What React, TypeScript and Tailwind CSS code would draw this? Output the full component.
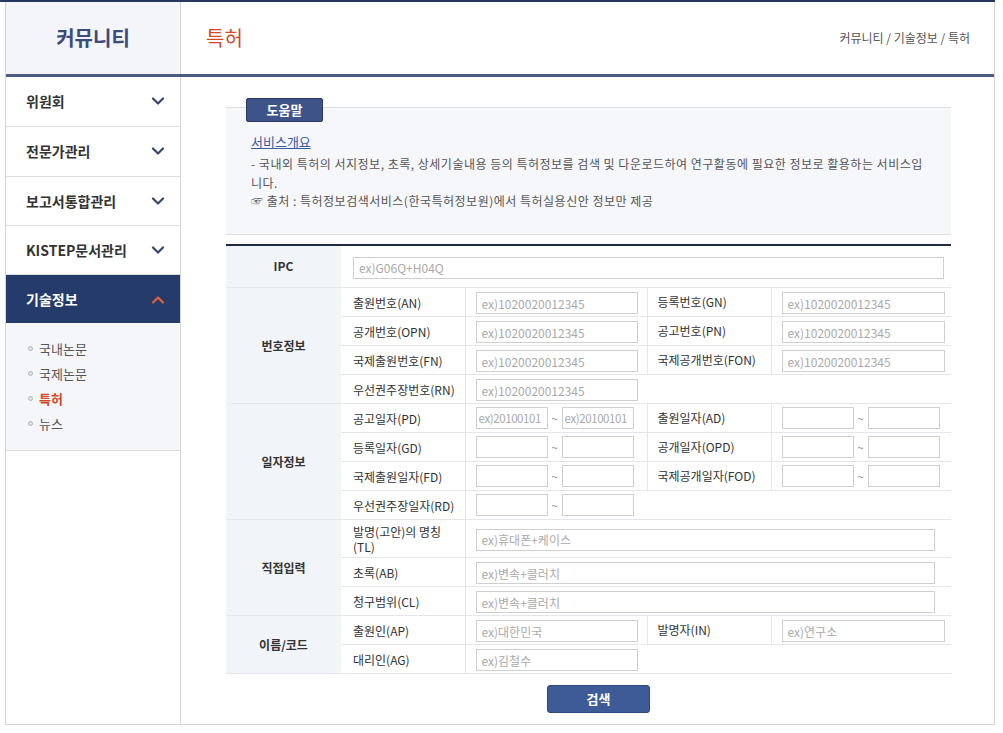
import type { ReactNode } from 'react';

const FONT = '"Noto Sans CJK KR", "Noto Sans", sans-serif';

const menu = [
  { name: '위원회', h: 'h-[50px]' },
  { name: '전문가관리', h: 'h-[50px]' },
  { name: '보고서통합관리', h: 'h-[49px]' },
  { name: 'KISTEP문서관리', h: 'h-[49px]' },
];
const subMenu = ['국내논문', '국제논문', '특허', '뉴스'];

function Chevron({ up = false, color }: { up?: boolean; color: string }) {
  return (
    <svg width="14" height="9" viewBox="0 0 14 9" fill="none" stroke={color} strokeWidth="2.2" strokeLinecap="round" strokeLinejoin="round">
      {up ? <path d="M2 7.5 7 2.5l5 5" /> : <path d="M2 1.5 7 6.5l5-5" />}
    </svg>
  );
}

const inputCls =
  'h-[22px] border border-[#cfcfcf] bg-white text-[#333] placeholder:text-[#aaaaaa] outline-none';

function Field({ w, ph, pad = 'px-[5px] text-[12px]' }: { w: string; ph?: string; pad?: string }) {
  return <input type="text" placeholder={ph} className={`${inputCls} ${pad} ${w}`} />;
}

// date inputs are narrow, so the placeholder gets a tighter setting
const datePad = 'px-[2px] text-[11.5px] tracking-[-0.4px]';

function DateRange({ ph }: { ph?: boolean }) {
  return (
    <div className="flex items-center">
      <Field w="w-[72px]" pad={datePad} ph={ph ? 'ex)20100101' : undefined} />
      <span className="w-[14px] text-center text-[11px] text-[#888]">~</span>
      <Field w="w-[72px]" pad={datePad} ph={ph ? 'ex)20100101' : undefined} />
    </div>
  );
}

const th = 'border-b border-[#e3e6ea] bg-[#f1f4f9] text-center align-middle text-[12px] font-bold text-[#333]';
const lbl = 'border-b border-[#e3e6ea] pl-[12px] align-middle text-[12px] leading-[15px] text-[#333]';
const lbl2 = 'border-b border-l border-[#e3e6ea] pl-[10px] align-middle text-[12px] text-[#333]';
const val = 'border-b border-l border-[#e3e6ea] pl-[10px] align-middle';

function Row({ h = 'h-[29px]', children }: { h?: string; children: ReactNode }) {
  return <tr className={h}>{children}</tr>;
}

export default function App() {
  return (
    <div className="min-h-[733px] bg-white" style={{ fontFamily: FONT }}>
      <div className="h-[2px] w-[995px] bg-[#27385f]" />
      <div className="ml-[5px] w-[990px] border-x border-b border-[#d6d6d6]">
        {/* Header */}
        <div className="flex h-[75px] border-b-[3px] border-[#4d5b80]">
          <div className="flex w-[175px] items-center justify-center border-r border-[#d6d6d6] bg-[#f4f5f9]">
            <span className="text-[20px] font-bold text-[#3b4b7a]">커뮤니티</span>
          </div>
          <div className="flex flex-1 items-center justify-between pl-[25px] pr-[24px]">
            <h1 className="text-[20px] text-[#d24a2a]">특허</h1>
            <span className="text-[12px] text-[#555]">커뮤니티 / 기술정보 / 특허</span>
          </div>
        </div>

        <div className="flex">
          {/* Sidebar */}
          <aside className="w-[175px] shrink-0 border-r border-[#d6d6d6]">
            {menu.map((m) => (
              <div key={m.name} className={`flex ${m.h} items-center justify-between border-b border-[#dcdcdc] pl-[20px] pr-[15px]`}>
                <span className="text-[14px] font-bold text-[#333]">{m.name}</span>
                <Chevron color="#34456e" />
              </div>
            ))}
            <div className="flex h-[48px] items-center justify-between bg-[#253b69] pl-[20px] pr-[15px]">
              <span className="text-[14px] font-bold text-white">기술정보</span>
              <Chevron up color="#e2603a" />
            </div>
            <ul className="border-b border-[#dcdcdc] bg-[#f5f6f9] pb-[14px] pt-[13px]">
              {subMenu.map((s) => (
                <li key={s} className="flex h-[25px] items-center pl-[22px]">
                  <span className="mr-[6px] h-[5px] w-[5px] rounded-full border border-[#b5b5b5] bg-[#e4e4e4]" />
                  <span className={s === '특허' ? 'text-[13px] font-bold text-[#d24a2a]' : 'text-[13px] text-[#555]'}>{s}</span>
                </li>
              ))}
            </ul>
          </aside>

          {/* Content */}
          <main className="flex-1 pb-[11px] pl-[45px] pr-[44px] pt-[21px]">
            <div className="relative">
              <div className="relative z-10 ml-[20px] flex h-[24px] w-[77px] items-center justify-center rounded-[2px] border border-[#2a3a62] bg-[#3e5388] text-[13px] font-bold text-white">
                도움말
              </div>
              <div className="-mt-[15px] border-y border-[#dddddd] bg-[#f5f7fb] pb-[23px] pl-[25px] pr-[25px] pt-[20px]">
                <a className="text-[13px] text-[#3a5aa8] underline">서비스개요</a>
                <p className="mt-[3px] text-[12px] leading-[18.5px] tracking-[0.5px] text-[#555]">
                  - 국내외 특허의 서지정보, 초록, 상세기술내용 등의 특허정보를 검색 및 다운로드하여 연구활동에 필요한 정보로 활용하는 서비스입니다.
                  <br />☞ 출처 : 특허정보검색서비스(한국특허정보원)에서 특허실용신안 정보만 제공
                </p>
              </div>
            </div>

            <table className="mt-[9px] w-full table-fixed border-collapse border-t-2 border-[#1f2a44]">
              <colgroup>
                <col className="w-[115px]" />
                <col className="w-[124px]" />
                <col className="w-[182px]" />
                <col className="w-[124px]" />
                <col className="w-[180px]" />
              </colgroup>
              <tbody>
                <Row h="h-[43px]">
                  <td className={th}>IPC</td>
                  <td colSpan={4} className="border-b border-[#e3e6ea] pl-[12px] align-middle">
                    <Field w="w-[591px]" ph="ex)G06Q+H04Q" />
                  </td>
                </Row>

                <Row>
                  <td rowSpan={4} className={th}>번호정보</td>
                  <td className={lbl}>출원번호(AN)</td>
                  <td className={val}><Field w="w-[162px]" ph="ex)1020020012345" /></td>
                  <td className={lbl2}>등록번호(GN)</td>
                  <td className={val}><Field w="w-[163px]" ph="ex)1020020012345" /></td>
                </Row>
                <Row>
                  <td className={lbl}>공개번호(OPN)</td>
                  <td className={val}><Field w="w-[162px]" ph="ex)1020020012345" /></td>
                  <td className={lbl2}>공고번호(PN)</td>
                  <td className={val}><Field w="w-[163px]" ph="ex)1020020012345" /></td>
                </Row>
                <Row>
                  <td className={lbl}>국제출원번호(FN)</td>
                  <td className={val}><Field w="w-[162px]" ph="ex)1020020012345" /></td>
                  <td className={lbl2}>국제공개번호(FON)</td>
                  <td className={val}><Field w="w-[163px]" ph="ex)1020020012345" /></td>
                </Row>
                <Row>
                  <td className={lbl}>우선권주장번호(RN)</td>
                  <td colSpan={3} className={val}><Field w="w-[162px]" ph="ex)1020020012345" /></td>
                </Row>

                <Row>
                  <td rowSpan={4} className={th}>일자정보</td>
                  <td className={lbl}>공고일자(PD)</td>
                  <td className={val}><DateRange ph /></td>
                  <td className={lbl2}>출원일자(AD)</td>
                  <td className={val}><DateRange /></td>
                </Row>
                <Row>
                  <td className={lbl}>등록일자(GD)</td>
                  <td className={val}><DateRange /></td>
                  <td className={lbl2}>공개일자(OPD)</td>
                  <td className={val}><DateRange /></td>
                </Row>
                <Row>
                  <td className={lbl}>국제출원일자(FD)</td>
                  <td className={val}><DateRange /></td>
                  <td className={lbl2}>국제공개일자(FOD)</td>
                  <td className={val}><DateRange /></td>
                </Row>
                <Row>
                  <td className={lbl}>우선권주장일자(RD)</td>
                  <td colSpan={3} className={val}><DateRange /></td>
                </Row>

                <Row h="h-[38px]">
                  <td rowSpan={3} className={th}>직접입력</td>
                  <td className={lbl}>발명(고안)의 명칭<br />(TL)</td>
                  <td colSpan={3} className={val}><Field w="w-[459px]" ph="ex)휴대폰+케이스" /></td>
                </Row>
                <Row>
                  <td className={lbl}>초록(AB)</td>
                  <td colSpan={3} className={val}><Field w="w-[459px]" ph="ex)변속+클러치" /></td>
                </Row>
                <Row>
                  <td className={lbl}>청구범위(CL)</td>
                  <td colSpan={3} className={val}><Field w="w-[459px]" ph="ex)변속+클러치" /></td>
                </Row>

                <Row>
                  <td rowSpan={2} className={th}>이름/코드</td>
                  <td className={lbl}>출원인(AP)</td>
                  <td className={val}><Field w="w-[162px]" ph="ex)대한민국" /></td>
                  <td className={lbl2}>발명자(IN)</td>
                  <td className={val}><Field w="w-[163px]" ph="ex)연구소" /></td>
                </Row>
                <Row>
                  <td className={lbl}>대리인(AG)</td>
                  <td colSpan={3} className={val}><Field w="w-[162px]" ph="ex)김철수" /></td>
                </Row>
              </tbody>
            </table>

            <div className="mt-[11px] pl-[321px]">
              <button className="h-[28px] w-[103px] rounded-[3px] border border-[#2f4a80] bg-[#3e5b97] text-[13px] font-bold text-white">
                검색
              </button>
            </div>
          </main>
        </div>
      </div>
    </div>
  );
}
